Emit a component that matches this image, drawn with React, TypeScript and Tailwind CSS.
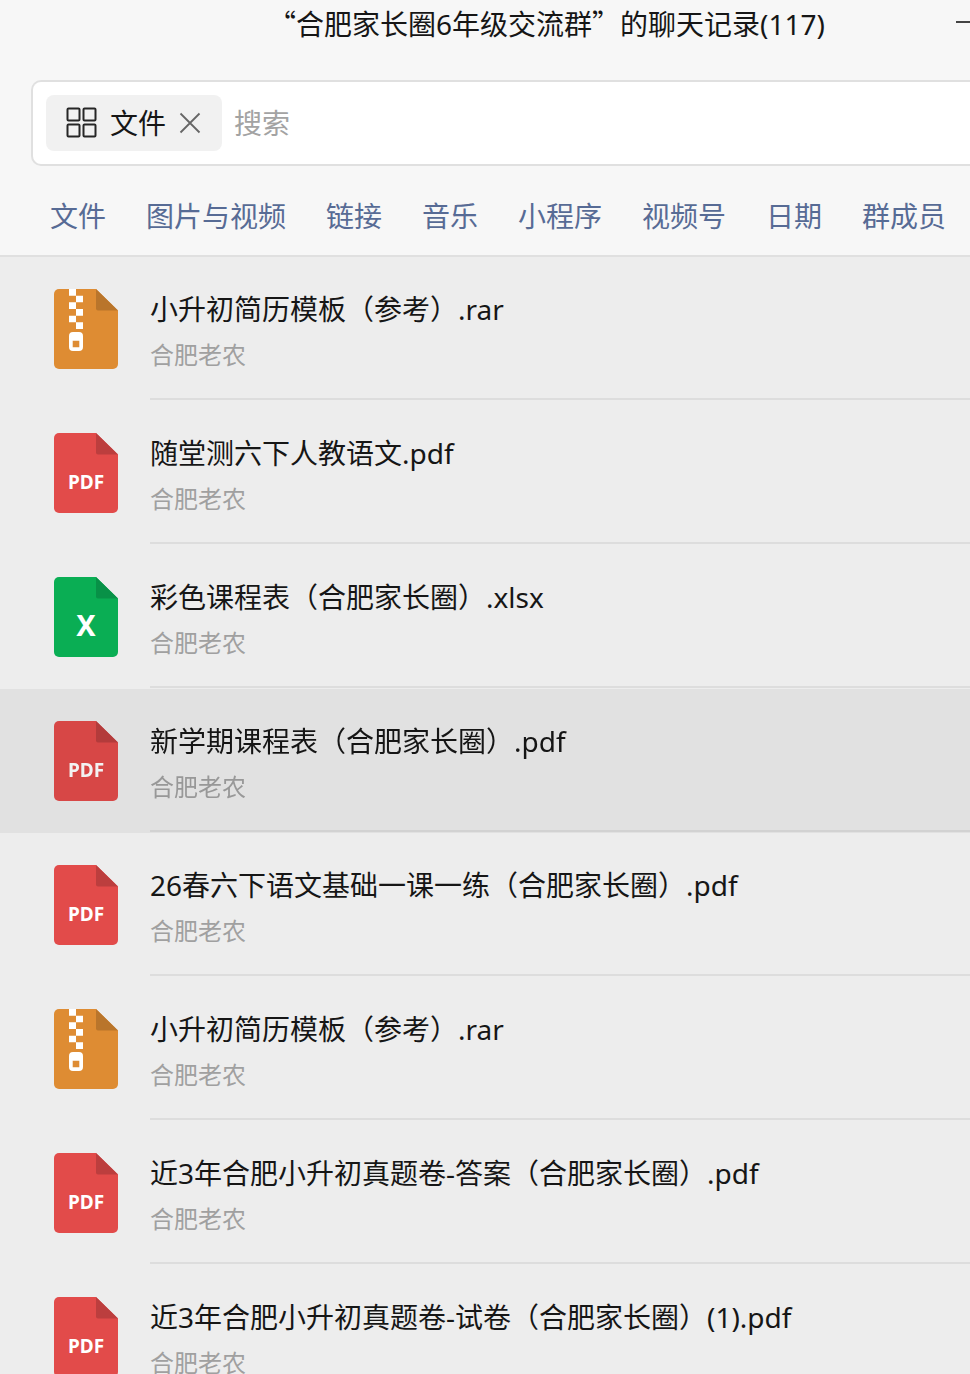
import React from 'react';

type FileKind = 'rar' | 'pdf' | 'xlsx';

interface ChatFile {
  name: string;
  sender: string;
  kind: FileKind;
  active?: boolean;
}

const tabs = ['文件', '图片与视频', '链接', '音乐', '小程序', '视频号', '日期', '群成员'];

const files: ChatFile[] = [
  { name: '小升初简历模板（参考）.rar', sender: '合肥老农', kind: 'rar' },
  { name: '随堂测六下人教语文.pdf', sender: '合肥老农', kind: 'pdf' },
  { name: '彩色课程表（合肥家长圈）.xlsx', sender: '合肥老农', kind: 'xlsx' },
  { name: '新学期课程表（合肥家长圈）.pdf', sender: '合肥老农', kind: 'pdf', active: true },
  { name: '26春六下语文基础一课一练（合肥家长圈）.pdf', sender: '合肥老农', kind: 'pdf' },
  { name: '小升初简历模板（参考）.rar', sender: '合肥老农', kind: 'rar' },
  { name: '近3年合肥小升初真题卷-答案（合肥家长圈）.pdf', sender: '合肥老农', kind: 'pdf' },
  { name: '近3年合肥小升初真题卷-试卷（合肥家长圈）(1).pdf', sender: '合肥老农', kind: 'pdf' },
];

const palette = {
  rar: { body: '#de8c33', fold: '#b9752b' },
  pdf: { body: '#e24b4a', fold: '#bc3e3e' },
  xlsx: { body: '#0aae54', fold: '#089147' },
};

const FileIcon: React.FC<{ kind: FileKind }> = ({ kind }) => (
  <svg viewBox="0 0 64 80" className="h-20 w-16 shrink-0" aria-hidden="true">
    <path
      d="M5 0H42L64 21.5V75a5 5 0 0 1-5 5H5a5 5 0 0 1-5-5V5a5 5 0 0 1 5-5Z"
      fill={palette[kind].body}
    />
    <path d="M42 0L64 21.5H44a2 2 0 0 1-2-2Z" fill={palette[kind].fold} />
    {kind === 'rar' && (
      <>
        <path
          d="M15 0h7v6.7h-7zM22 6.7h7v6.6h-7zM15 13.3h7v6.7h-7zM22 20h7v6.7h-7zM15 26.7h7v6.6h-7zM22 33.3h7v6.7h-7z"
          fill="#fff"
        />
        <path
          d="M19 43h6a4 4 0 0 1 4 4v11a4 4 0 0 1-4 4h-6a4 4 0 0 1-4-4V47a4 4 0 0 1 4-4ZM18.7 51.7v6.6h6.6v-6.6Z"
          fill="#fff"
          fillRule="evenodd"
        />
      </>
    )}
    {kind === 'pdf' && (
      <text x="32" y="56" textAnchor="middle" fill="#fff" className="font-['Noto_Sans',sans-serif] text-[19px] font-bold">
        PDF
      </text>
    )}
    {kind === 'xlsx' && (
      <text x="32" y="59" textAnchor="middle" fill="#fff" className="font-['Noto_Sans',sans-serif] text-[29px] font-bold">
        X
      </text>
    )}
  </svg>
);

const FileRow: React.FC<{ file: ChatFile }> = ({ file }) => (
  <li className={`flex h-36 gap-8 bg-[#ededed] pb-px pl-[54px] ${file.active ? 'brightness-95' : ''}`}>
    <div className="pt-8">
      <FileIcon kind={file.kind} />
    </div>
    <div className="min-w-0 flex-1 border-b-2 border-[#dddddd] pt-8">
      <p className="truncate text-[28px] leading-[40px] text-[#161616]">{file.name}</p>
      <p className="mt-[10px] truncate text-[24px] leading-[32px] text-[#a0a0a0]">{file.sender}</p>
    </div>
  </li>
);

const App: React.FC = () => {
  return (
    <div lang="zh-CN" className="overflow-hidden bg-[#ededed] font-['Noto_Sans','Noto_Sans_CJK_SC',sans-serif]">
      <header className="border-b-2 border-[#e0e0e0] bg-[#f7f7f7]">
        <div className="flex h-20 items-start justify-between pl-[268px]">
          <h1 className="pt-[3px] text-[28px] leading-[40px] whitespace-nowrap text-[#161616]">
            <span className="font-['Noto_Sans_CJK_SC',sans-serif]">“</span>
            合肥家长圈6年级交流群
            <span className="font-['Noto_Sans_CJK_SC',sans-serif]">”</span>
            的聊天记录(117)
          </h1>
          <button type="button" aria-label="最小化" className="pt-[21px]">
            <span className="block h-[2px] w-[14px] bg-[#444444]" />
          </button>
        </div>

        <div className="ml-[31px] flex h-[86px] items-center rounded-l-[10px] border-2 border-r-0 border-[#e0e0e0] bg-white pl-[13px]">
          <div className="flex h-14 items-center rounded-lg bg-[#f1f1f1] px-5">
            <svg viewBox="0 0 32 32" className="h-8 w-8" fill="none" stroke="#262626" strokeWidth="2" aria-hidden="true">
              <rect x="1.5" y="1.5" width="12" height="12" rx="1" />
              <rect x="17.5" y="1.5" width="12" height="12" rx="1" />
              <rect x="1.5" y="17.5" width="12" height="12" rx="1" />
              <rect x="17.5" y="17.5" width="12" height="12" rx="1" />
            </svg>
            <span className="ml-3 text-[28px] leading-[40px] text-[#161616]">文件</span>
            <button type="button" aria-label="清除" className="ml-3">
              <svg viewBox="0 0 24 24" className="h-6 w-6" fill="none" stroke="#666" strokeWidth="1.8">
                <path d="M2.5 2.5l19 19M21.5 2.5l-19 19" />
              </svg>
            </button>
          </div>
          <input
            type="text"
            aria-label="搜索"
            placeholder="搜索"
            className="ml-3 min-w-0 flex-1 text-[28px] leading-[40px] outline-none placeholder:text-[#a3a3a3]"
          />
        </div>

        <nav className="flex gap-10 pt-[30px] pb-[19px] pl-[50px]">
          {tabs.map((tab) => (
            <button key={tab} type="button" className="text-[28px] leading-[40px] whitespace-nowrap text-[#576b95]">
              {tab}
            </button>
          ))}
        </nav>
      </header>

      <ul>
        {files.map((file, index) => (
          <FileRow key={index} file={file} />
        ))}
      </ul>
    </div>
  );
};

export default App;
